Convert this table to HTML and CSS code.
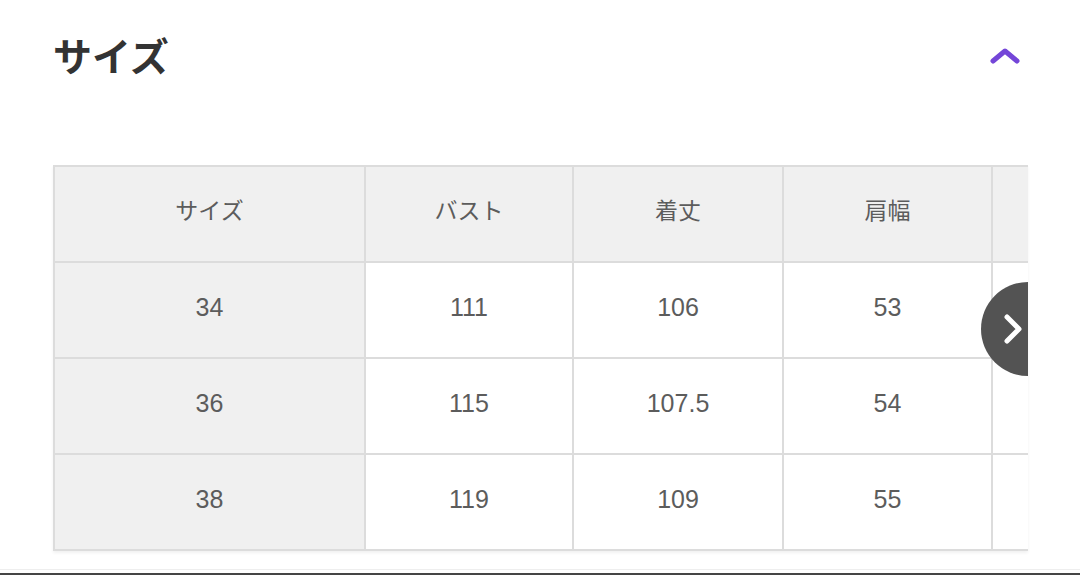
FILE: index.html
```html
<!DOCTYPE html>
<html lang="ja">
<head>
<meta charset="utf-8">
<title>サイズ</title>
<link rel="stylesheet" href="styles.css">
</head>
<body>
<div class="page">
  <section class="size-section">
    <div class="section-head">
      <h2 class="section-title">サイズ</h2>
      <button class="toggle" aria-label="閉じる">
        <svg width="30" height="18" viewBox="0 0 30 18"><path d="M3 14 L15 4 L27 14" fill="none" stroke="#7446d8" stroke-width="5" stroke-linecap="round" stroke-linejoin="round"/></svg>
      </button>
    </div>
    <div class="table-wrap">
      <table class="size-table">
        <thead>
          <tr><th class="c1">サイズ</th><th class="c2">バスト</th><th class="c3">着丈</th><th class="c4">肩幅</th><th class="c5"></th></tr>
        </thead>
        <tbody>
          <tr><th class="c1">34</th><td>111</td><td>106</td><td>53</td><td class="c5"></td></tr>
          <tr><th class="c1">36</th><td>115</td><td>107.5</td><td>54</td><td class="c5"></td></tr>
          <tr><th class="c1">38</th><td>119</td><td>109</td><td>55</td><td class="c5"></td></tr>
        </tbody>
      </table>
      <button class="scroll-next" aria-label="次へ">
        <svg width="30" height="40" viewBox="0 0 30 40"><path d="M6 8 L18 20 L6 32" fill="none" stroke="#fff" stroke-width="5" stroke-linecap="round" stroke-linejoin="round"/></svg>
      </button>
    </div>
  </section>
  <div class="bottom-bar"></div>
</div>
</body>
</html>
```

FILE: styles.css
```css
* { box-sizing: border-box; }
html, body { margin: 0; padding: 0; background: #fff; }
body {
  font-family: "Liberation Sans", "Noto Sans CJK JP", sans-serif;
  color: #333;
}
.page {
  width: 1080px;
  height: 575px;
  display: flex;
  flex-direction: column;
  overflow: hidden;
}
.size-section {
  padding: 25px 52px 0 53px;
  flex: 1;
}
.section-head {
  display: flex;
  align-items: center;
  justify-content: space-between;
  height: 58px;
}
.section-title {
  margin: 0;
  font-family: "Noto Sans CJK JP", sans-serif;
  font-size: 39px;
  font-weight: 700;
  color: #333;
  line-height: 1;
}
.toggle {
  border: 0;
  background: none;
  padding: 0;
  margin: 3px 8px 0 0;
  display: flex;
}
.table-wrap {
  position: relative;
  margin-top: 82px;
  width: 975px;
  overflow: hidden;
  box-shadow: 0 2px 3px rgba(0,0,0,0.06);
}
.size-table {
  border-collapse: separate;
  border-spacing: 0;
  table-layout: fixed;
  width: 1147px;
}
.size-table th, .size-table td {
  box-sizing: border-box;
  border-right: 2px solid #dcdcdc;
  border-bottom: 2px solid #dcdcdc;
  text-align: center;
  vertical-align: middle;
  font-weight: 400;
  color: #5c5c5c;
  padding: 0 0 5px;
}
.size-table thead th {
  background: #f0f0f0;
  border-top: 2px solid #dcdcdc;
  height: 98px;
  font-family: "Noto Sans CJK JP", sans-serif;
  font-size: 23px;
  padding-bottom: 11px;
}
.size-table tbody th, .size-table tbody td {
  height: 96px;
  font-size: 25px;
}
.size-table .c1 { background: #f0f0f0; border-left: 2px solid #dcdcdc; width: 313px; }
.size-table .c2 { width: 208px; }
.size-table .c3 { width: 210px; }
.size-table .c4 { width: 209px; }
.size-table .c5 { width: 207px; }
.scroll-next {
  position: absolute;
  right: -47px;
  top: 117px;
  width: 94px;
  height: 94px;
  border-radius: 50%;
  border: 0;
  background: #535353;
  padding: 0 0 0 20px;
  display: flex;
  align-items: center;
  justify-content: flex-start;
}
.bottom-bar {
  height: 6px;
  border-top: 1px solid #eeeeee;
  border-bottom: 2px solid #454545;
}
```
